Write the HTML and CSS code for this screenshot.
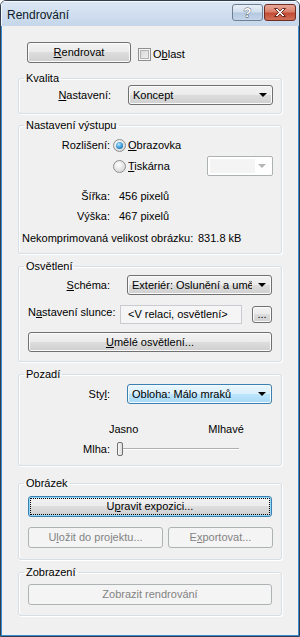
FILE: index.html
```html
<!DOCTYPE html>
<html lang="cs">
<head>
    <meta charset="UTF-8">
    <title>Rendrování</title>
    <link rel="stylesheet" href="styles.css">
</head>
<body>
    <div class="window">
        <div class="titlebar">
            <span class="title">Rendrování</span>
            <div class="caption">
                <span class="cap-btn help">
                    <svg width="11" height="13" viewBox="0 0 11 13">
                        <text x="5.5" y="11" text-anchor="middle" font-family="Liberation Sans, sans-serif" font-weight="bold" font-size="13" fill="#fff" stroke="#3f4a57" stroke-width="0.8" paint-order="stroke">?</text>
                    </svg>
                </span>
                <span class="cap-btn close">
                    <svg width="14" height="11" viewBox="0 0 14 11">
                        <path d="M1.5 1.5h3l2.5 2.6 2.5-2.6h3l-4 4 4 4h-3L7 6.9 4.5 9.5h-3l4-4z" fill="#fff" stroke="#5a1a12" stroke-width="0.9" stroke-linejoin="round"/>
                    </svg>
                </span>
            </div>
        </div>

        <div class="client">
            <div class="top-row">
                <button class="btn render"><u>R</u>endrovat</button>
                <span class="chk"></span>
                <span class="chk-label">O<u>b</u>last</span>
            </div>

            <fieldset class="group quality">
                <legend>Kvalita</legend>
                <div class="row">
                    <span class="lbl wide"><u>N</u>astavení:</span>
                    <div class="combo after-lbl"><span class="text">Koncept</span><span class="arrow"></span></div>
                </div>
            </fieldset>

            <fieldset class="group output">
                <legend>Nastavení výstupu</legend>
                <div class="row">
                    <span class="lbl">Rozlišení:</span>
                    <span class="radio checked"></span>
                    <span class="radio-label"><u>O</u>brazovka</span>
                </div>
                <div class="row r-print">
                    <span class="lbl"></span>
                    <span class="radio"></span>
                    <span class="radio-label"><u>T</u>iskárna</span>
                    <div class="combo disabled small"><span class="field"></span><span class="arrow"></span></div>
                </div>
                <div class="row r-size">
                    <span class="lbl">Šířka:</span>
                    <span class="value">456 pixelů</span>
                </div>
                <div class="row">
                    <span class="lbl">Výška:</span>
                    <span class="value">467 pixelů</span>
                </div>
                <div class="row r-raw">
                    <span>Nekomprimovaná velikost obrázku:</span>
                    <span class="raw-value">831.8 kB</span>
                </div>
            </fieldset>

            <fieldset class="group lighting">
                <legend>Osvětlení</legend>
                <div class="row">
                    <span class="lbl"><u>S</u>chéma:</span>
                    <div class="combo after-lbl"><span class="text">Exteriér: Oslunění a umělé</span><span class="arrow"></span></div>
                </div>
                <div class="row r-sun">
                    <span class="lbl">N<u>a</u>stavení slunce:</span>
                    <div class="textbox">&lt;V relaci, osvětlení&gt;</div>
                    <button class="btn dots">...</button>
                </div>
                <button class="btn full r-artificial"><u>U</u>mělé osvětlení...</button>
            </fieldset>

            <fieldset class="group background">
                <legend>Pozadí</legend>
                <div class="row">
                    <span class="lbl">Sty<u>l</u>:</span>
                    <div class="combo hot after-lbl"><span class="text">Obloha: Málo mraků</span><span class="arrow"></span></div>
                </div>
                <div class="row r-scale">
                    <span class="scale-left">Jasno</span>
                    <span class="scale-right">Mlhavé</span>
                </div>
                <div class="row">
                    <span class="lbl">Mlha:</span>
                    <div class="slider"><span class="thumb"></span></div>
                </div>
            </fieldset>

            <fieldset class="group image">
                <legend>Obrázek</legend>
                <button class="btn full focused">U<u>p</u>ravit expozici...</button>
                <div class="row r-export">
                    <button class="btn disabled save">U<u>l</u>ožit do projektu...</button>
                    <button class="btn disabled export">E<u>x</u>portovat...</button>
                </div>
            </fieldset>

            <fieldset class="group display">
                <legend>Zobrazení</legend>
                <button class="btn full disabled">Zobrazit rendrování</button>
            </fieldset>
        </div>
    </div>
</body>
</html>
```

FILE: styles.css
```css
body {
    margin: 0;
    font-family: "Liberation Sans", Arial, sans-serif;
    font-size: 11px;
    color: #000;
}

.window {
    width: 300px;
    height: 637px;
    box-sizing: border-box;
    border: 1px solid #313d4a;
    border-radius: 6px 6px 0 0;
    background: #c9d9ec;
    display: flex;
    flex-direction: column;
    overflow: hidden;
}

.titlebar {
    height: 25px;
    flex: none;
    display: flex;
    align-items: flex-start;
    background: linear-gradient(#dde8f5, #c5d6ea);
    box-shadow: inset 1px 1px 0 #f4f8fc;
}

.title {
    font-size: 12px;
    line-height: 14px;
    margin: 7px 0 0 6px;
    color: #0d1a28;
}

.caption {
    margin: 3px 0 0 auto;
    display: flex;
    gap: 1px;
    padding-right: 3px;
}

.cap-btn {
    width: 31px;
    height: 17px;
    box-sizing: border-box;
    border: 1px solid #6f7f92;
    border-radius: 3px;
    display: flex;
    align-items: center;
    justify-content: center;
}

.help {
    background: linear-gradient(#e9eff7 0%, #d2dfee 45%, #b6c9e0 55%, #c4d5ea 100%);
}

.close {
    width: 32px;
    border-color: #6d2d23;
    background: linear-gradient(#e9a99b 0%, #d9806b 45%, #c24c35 55%, #d0705a 100%);
}

.client {
    flex: 1;
    background: #f0f0f0;
    border: 1px solid #3a8bd0;
    border-top: none;
    padding-top: 16px;
}

/* buttons */

.btn {
    font-family: inherit;
    font-size: 11px;
    color: #000;
    height: 21px;
    padding: 0;
    box-sizing: border-box;
    border: 1px solid #707070;
    border-radius: 3px;
    background: linear-gradient(#f2f2f2 0%, #ebebeb 50%, #dddddd 50%, #cfcfcf 100%);
    box-shadow: inset 0 0 0 1px #fbfbfb;
    line-height: 19px;
}

.btn.focused {
    border-color: #3c7fb1;
    box-shadow: inset 0 0 0 1px #8fd8f9;
    outline: 1px dotted #000;
    outline-offset: -3px;
}

.btn.disabled {
    border-color: #adb2b5;
    background: #f4f4f4;
    box-shadow: none;
    color: #838383;
}

.top-row {
    display: flex;
    align-items: flex-start;
    height: 21px;
}

.render {
    margin-left: 25px;
    width: 104px;
}

.chk {
    margin: 6px 0 0 7px;
    width: 13px;
    height: 13px;
    box-sizing: border-box;
    border: 1px solid #8f8f8f;
    background: linear-gradient(135deg, #d2d2d2, #f4f4f4);
    box-shadow: inset 0 0 0 1px #f6f6f6, inset 0 0 0 2px #b2b2b2;
}

.chk-label {
    margin: 4px 0 0 2px;
    line-height: 16px;
}

/* group boxes */

.group {
    margin: 0 0 0 16px;
    width: 264px;
    box-sizing: border-box;
    border: 1px solid #d5dfe5;
    border-radius: 3px;
    box-shadow: 1px 1px 0 #fff, inset 1px 1px 0 #fff;
    padding: 0 8px 0 9px;
    min-width: 0;
}

.group legend {
    padding: 0 2px;
    margin-left: -4px;
    line-height: 13px;
}

.quality { margin-top: 9px; padding-bottom: 8px; }
.output { margin-top: 5px; padding-top: 3px; padding-bottom: 5px; }
.lighting { margin-top: 6px; padding-top: 2px; padding-bottom: 9px; }
.background { margin-top: 6px; padding-top: 3px; padding-bottom: 6px; }
.image { margin-top: 11px; padding-top: 6px; padding-bottom: 11px; }
.display { margin-top: 6px; padding-top: 5px; padding-bottom: 10px; }

.row {
    display: flex;
    align-items: center;
    height: 20px;
    line-height: 20px;
    white-space: nowrap;
}

.lbl {
    width: 82px;
    text-align: right;
    flex: none;
}

.lbl.wide {
    width: 83px;
}

/* combo boxes */

.combo {
    position: relative;
    display: flex;
    height: 20px;
    box-sizing: border-box;
    width: 145px;
    border: 1px solid #707070;
    border-radius: 3px;
    background: linear-gradient(#f2f2f2 0%, #ebebeb 50%, #dddddd 50%, #cfcfcf 100%);
    box-shadow: inset 0 0 0 1px #fbfbfb;
    line-height: 18px;
    padding: 0 0 0 4px;
    white-space: nowrap;
}

.combo .text {
    width: 120px;
    overflow: hidden;
}

.combo.after-lbl {
    margin-left: 17px;
}

.combo.hot {
    border-color: #3c7fb1;
    background: linear-gradient(#eaf6fd 0%, #d9f0fc 50%, #bee6fd 50%, #a7d9f5 100%);
    box-shadow: inset 0 0 0 1px #f2fafe;
}

.combo .arrow {
    position: absolute;
    right: 5px;
    top: 7px;
    border-left: 4px solid transparent;
    border-right: 4px solid transparent;
    border-top: 4px solid #000;
}

.combo.disabled {
    width: 66px;
    margin-left: auto;
    border-color: #adb2b5;
    border-radius: 2px;
    background: #fff;
    box-shadow: none;
    padding: 0;
}

.combo.disabled .field {
    position: absolute;
    left: 2px;
    top: 2px;
    bottom: 2px;
    width: 45px;
    background: #f4f4f4;
}

.combo.disabled .arrow {
    border-top-color: #b6b6b6;
    right: 6px;
}

/* radios */

.radio {
    margin-left: 3px;
    width: 13px;
    height: 13px;
    box-sizing: border-box;
    border-radius: 50%;
    border: 1px solid #8e8f8f;
    background: radial-gradient(circle at 40% 35%, #fff, #dcdcdc 70%, #cfcfcf);
    position: relative;
}

.radio.checked::after {
    content: "";
    position: absolute;
    left: 2px;
    top: 2px;
    width: 7px;
    height: 7px;
    border-radius: 50%;
    background: radial-gradient(circle at 40% 35%, #b8e4fb, #3596d4 55%, #13507e);
}

.radio-label {
    margin-left: 2px;
}

.r-print { margin-top: 1px; }
.r-size { margin-top: 10px; }
.r-raw { margin-top: 2px; margin-left: -6px; }

.value {
    margin-left: 9px;
}

.raw-value {
    margin-left: auto;
    width: 75px;
}

/* lighting */

.r-sun {
    margin-top: 7px;
    height: 22px;
    align-items: flex-start;
}

.r-sun .lbl {
    line-height: 20px;
}

.textbox {
    margin: 3px 0 0 10px;
    width: 122px;
    height: 19px;
    box-sizing: border-box;
    border: 1px solid #c9cbd0;
    background: #f5f5f5;
    line-height: 17px;
    padding-left: 7px;
}

.btn.dots {
    margin: 4px 0 0 10px;
    width: 20px;
    height: 17px;
    line-height: 13px;
}

.btn.full {
    display: block;
    width: 244px;
}

.r-artificial {
    margin-top: 8px;
    height: 20px;
    line-height: 18px;
}

/* background */

.r-scale {
    margin-top: 15px;
}

.scale-left {
    margin-left: 81px;
}

.scale-right {
    margin-left: 70px;
}

.slider {
    position: relative;
    margin-left: 7px;
    width: 122px;
    height: 16px;
}

.slider::before {
    content: "";
    position: absolute;
    left: 0;
    right: 0;
    top: 7px;
    height: 1px;
    background: #b0b0b0;
    box-shadow: 0 1px 0 #fff;
}

.thumb {
    position: absolute;
    left: 0;
    top: 1px;
    width: 6px;
    height: 14px;
    box-sizing: border-box;
    border: 1px solid #707070;
    border-radius: 2px;
    background: linear-gradient(90deg, #f8f8f8, #dcdcdc);
}

/* image */

.r-export {
    margin-top: 10px;
    height: 21px;
    gap: 5px;
}

.save {
    width: 135px;
}

.export {
    width: 105px;
}
```
